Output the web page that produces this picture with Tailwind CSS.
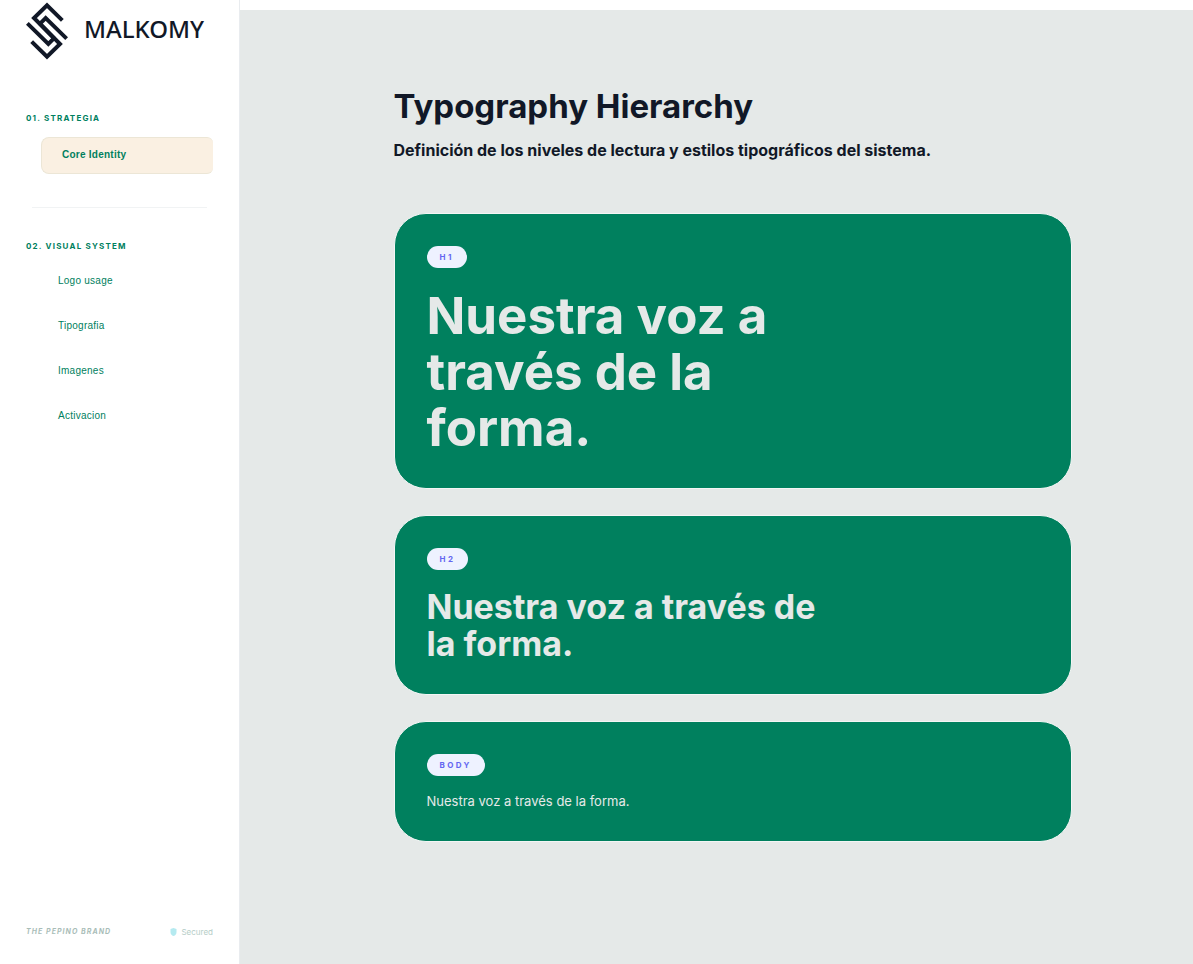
<!DOCTYPE html>
<html lang="es" class="h-full bg-white">
  <head>
    <meta charset="UTF-8" />
    <meta name="viewport" content="width=device-width, initial-scale=1.0" />
    <title>Malkomy - Typography Hierarchy</title>
    <script src="https://cdn.jsdelivr.net/npm/@tailwindcss/browser@4"></script>
  </head>
  <body class="flex min-h-screen bg-white font-['Inter',sans-serif] text-[#111827]">
    <aside class="flex w-60 shrink-0 flex-col border-r border-[#e9ecef] bg-white px-[26px]">
      <a href="#" class="flex h-[62px] items-center gap-4">
        <svg
          class="h-16 w-[42px] shrink-0"
          xmlns="http://www.w3.org/2000/svg"
          viewBox="19 -3 126 192"
          fill="none"
          stroke="#111827"
          stroke-width="12"
        >
          <path d="M128 61 L82 16 L43 54 L104 116" />
          <path d="M62 70 L78 54 L141 116" />
          <path d="M36 125 L82 170 L121 132 L60 70" />
          <path d="M23 70 L86 132 L102 116" />
        </svg>
        <span class="pb-1 font-['Noto_Sans',sans-serif] text-2xl font-medium">MALKOMY</span>
      </a>

      <nav class="mt-12 flex flex-col text-[10px] text-[#00805e]">
        <h2 class="text-[8px] leading-4 font-bold tracking-[0.15em]">01. STRATEGIA</h2>
        <a
          href="#"
          class="mt-[11px] ml-[15px] flex h-[37px] items-center rounded-l-lg rounded-r-md border border-r-0 border-[#ece6d6] bg-[#faf0e2] px-5 pb-0.5 font-['Liberation_Sans',sans-serif] font-bold tracking-wide"
          >Core Identity</a
        >
        <hr class="mx-1.5 mt-[33px] border-[#f1f3f4]" />
        <h2 class="mt-[30px] text-[8px] leading-4 font-bold tracking-[0.15em]">02. VISUAL SYSTEM</h2>
        <ul class="mt-[19px] space-y-[30px] pl-8 font-['Liberation_Sans',sans-serif] leading-[15px] tracking-wide">
          <li><a href="#">Logo usage</a></li>
          <li><a href="#">Tipografia</a></li>
          <li><a href="#">Imagenes</a></li>
          <li><a href="#">Activacion</a></li>
        </ul>
      </nav>

      <div class="mt-auto mb-6 flex items-center justify-between leading-4">
        <span class="text-[7px] font-bold tracking-[0.15em] text-[#a9bdb8] italic">THE PEPINO BRAND</span>
        <span class="flex items-center gap-1 text-[8px] text-[#b5cdc7]">
          <svg class="h-2 w-[7px]" xmlns="http://www.w3.org/2000/svg" viewBox="0 0 7 8">
            <path d="M3.5 0 L6.5 1 V4 Q6.5 7 3.5 8 Q.5 7 .5 4 V1 Z" fill="#b5eaf0" />
          </svg>
          Secured
        </span>
      </div>
    </aside>

    <main class="mt-2.5 flex-1 bg-[#e5e9e8] pt-[70px] pl-8">
      <div class="mx-auto max-w-[678px]">
        <h1 class="text-[33px] leading-[52px] font-bold">Typography Hierarchy</h1>
        <p class="mt-1.5 text-base leading-6 font-bold">
          Definición de los niveles de lectura y estilos tipográficos del sistema.
        </p>

        <div class="mt-[51px] space-y-[26px] text-[#e5e9e8]">
          <section class="rounded-[32px] border border-[#f3f6f5] bg-[#00805e] p-8">
            <span
              class="inline-flex h-[22px] items-center rounded-full bg-[#eef2ff] px-[13px] align-top text-[8px] font-bold tracking-[0.3em] text-[#6366f1]"
              >H1</span
            >
            <h1 class="mt-[18px] max-w-[400px] text-[51px] leading-14 font-bold">
              Nuestra voz a través de la forma.
            </h1>
          </section>

          <section class="rounded-[32px] border border-[#f3f6f5] bg-[#00805e] p-8">
            <span
              class="inline-flex h-[22px] items-center rounded-full bg-[#eef2ff] px-[13px] align-top text-[8px] font-bold tracking-[0.3em] text-[#6366f1]"
              >H2</span
            >
            <h2 class="mt-4 max-w-[400px] text-[34px] leading-[37px] font-bold">
              Nuestra voz a través de la forma.
            </h2>
          </section>

          <section class="rounded-[32px] border border-[#f3f6f5] bg-[#00805e] p-8">
            <span
              class="inline-flex h-[22px] items-center rounded-full bg-[#eef2ff] px-[13px] align-top text-[8px] font-bold tracking-[0.3em] text-[#6366f1]"
              >BODY</span
            >
            <p class="mt-4 max-w-[400px] text-[13px] leading-[15px]">
              Nuestra voz a través de la forma.
            </p>
          </section>
        </div>
      </div>
    </main>
  </body>
</html>
